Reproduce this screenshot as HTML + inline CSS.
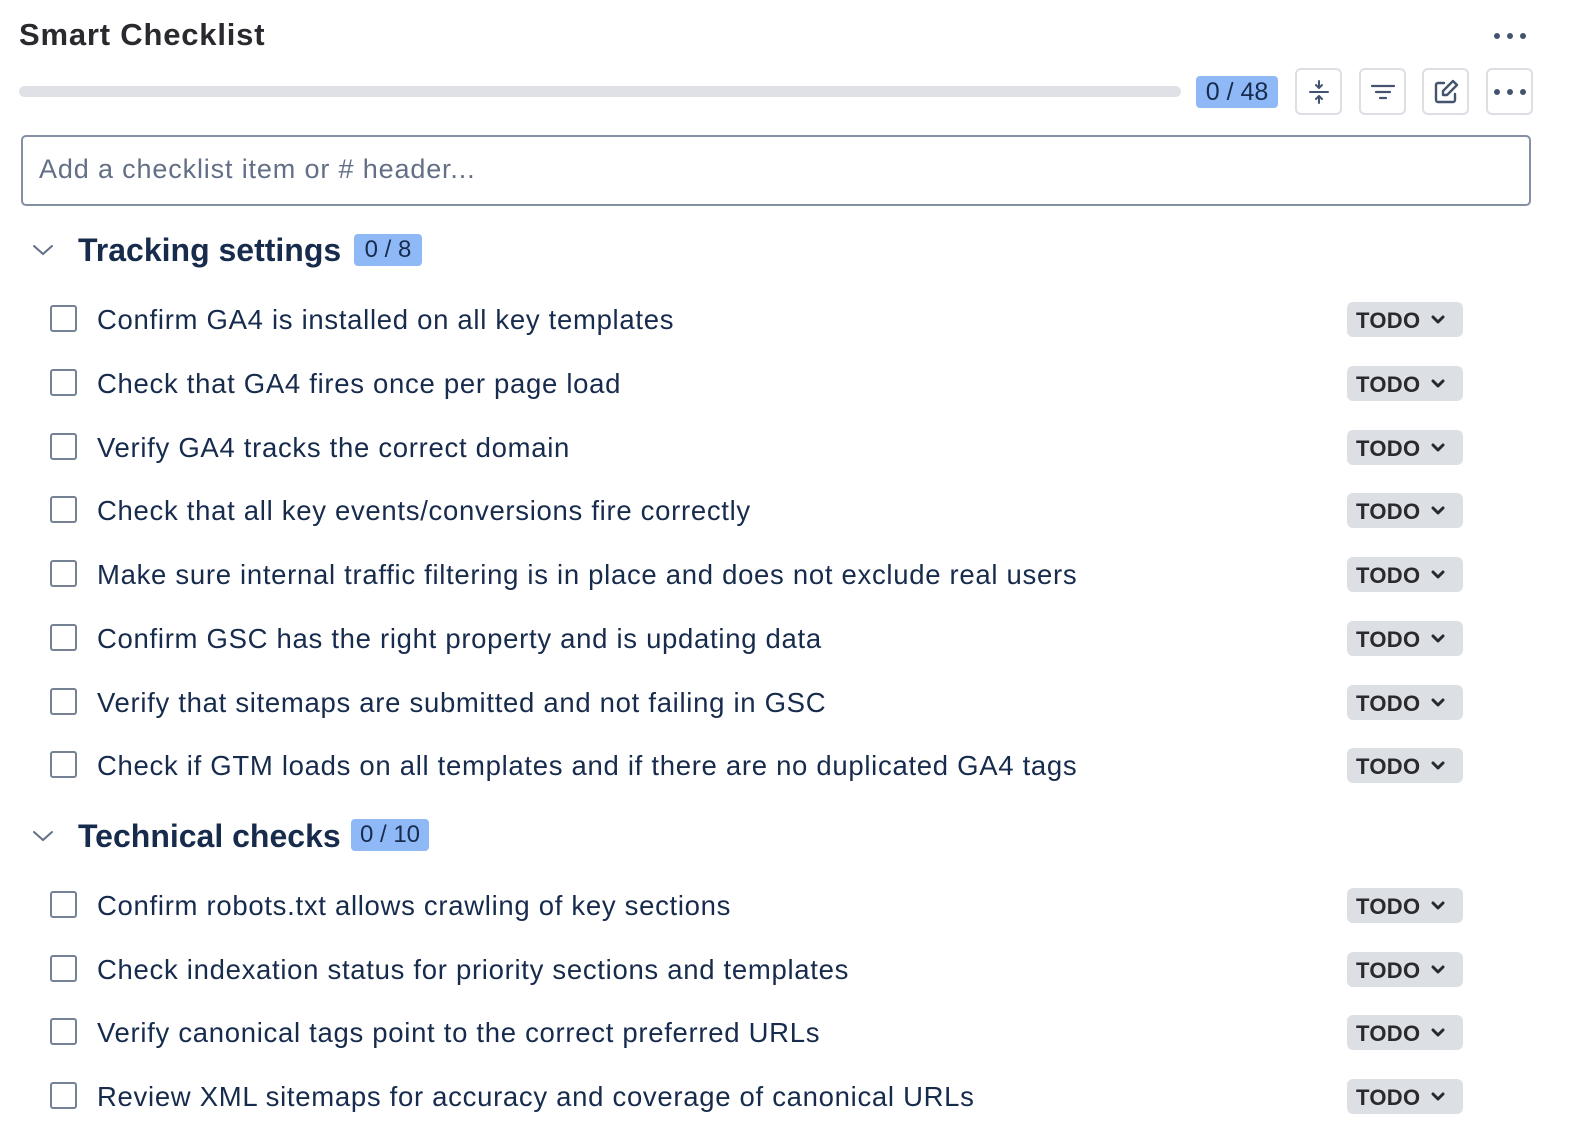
<!DOCTYPE html>
<html><head><meta charset="utf-8"><style>
*{box-sizing:border-box;margin:0;padding:0}
body{width:1574px;height:1132px;background:#fff;position:relative;overflow:hidden;font-family:"Liberation Sans",Arial,sans-serif;color:#172b4d}
.a{position:absolute}
.title{left:19px;top:17px;font-size:31px;font-weight:bold;color:#292a2e;letter-spacing:0.8px}
.dots{display:flex;gap:7px}
.dots i{width:6px;height:6px;border-radius:50%;background:#44546f;display:block}
.bar{left:19px;top:86px;width:1162px;height:11px;border-radius:6px;background:#dfe1e6}
.badge{background:#8fb8f6;border-radius:4px;color:#172b4d;display:flex;align-items:center;justify-content:center}
.btn{top:68px;width:47px;height:47px;border:2px solid #dcdfe4;border-radius:6px;display:flex;align-items:center;justify-content:center}
.inp{left:21px;top:135px;width:1510px;height:71px;border:2px solid #8590a2;border-radius:5px;font-size:27px;color:#626f86;padding:17px 0 0 16px;letter-spacing:0.85px}
.sec{font-size:32px;font-weight:bold;color:#172b4d;left:78px}
.cb{left:50px;width:27px;height:27px;border:2px solid #758195;border-radius:3px}
.txt{left:97px;font-size:27.5px;color:#172b4d;white-space:nowrap;letter-spacing:0.7px}
.todo{left:1347px;width:116px;height:35px;background:#dcdfe4;border-radius:6px;font-size:22px;font-weight:bold;color:#292a2e;padding:6px 0 0 9px;letter-spacing:0.3px}
.todo svg{position:absolute;left:84px;top:13px}
</style></head><body>
<div class="a title">Smart Checklist</div>
<div class="a dots" style="left:1494px;top:33px"><i></i><i></i><i></i></div>
<div class="a bar"></div>
<div class="a badge" style="left:1196px;top:76px;width:82px;height:32px;font-size:25px">0 / 48</div>
<div class="a btn" style="left:1295px"><svg width="22" height="26" viewBox="0 0 22 26" fill="none" stroke="#44546f" stroke-width="2" stroke-linecap="round" stroke-linejoin="round"><path d="M2 13H20M11 2V9M8 6L11 9L14 6M11 24V17M8 20L11 17L14 20"/></svg></div>
<div class="a btn" style="left:1359px"><svg width="26" height="22" viewBox="0 0 26 22" fill="none" stroke="#44546f" stroke-width="2.2" stroke-linecap="round"><path d="M2 5H24M6 11H20M10 17H16"/></svg></div>
<div class="a btn" style="left:1422px"><svg width="28" height="28" viewBox="0 0 28 28" fill="none" stroke="#44546f" stroke-width="2.4" stroke-linecap="round" stroke-linejoin="round"><path d="M12 5H6a2 2 0 0 0-2 2v15a2 2 0 0 0 2 2h15a2 2 0 0 0 2-2v-6"/><path d="M21 3l4 4-10 10h-4v-4z"/></svg></div>
<div class="a btn" style="left:1486px"><div class="dots"><i></i><i></i><i></i></div></div>
<div class="a inp">Add a checklist item or # header...</div>

<svg class="a" style="left:32px;top:243px" width="22" height="14" viewBox="0 0 22 14" fill="none" stroke="#626f86" stroke-width="2" stroke-linecap="round"><path d="M2 3L11 11L20 3"/></svg>
<div class="a sec" style="top:232px">Tracking settings</div>
<div class="a badge" style="left:354px;top:234px;width:68px;height:32px;font-size:24px">0 / 8</div>

<svg class="a" style="left:32px;top:829px" width="22" height="14" viewBox="0 0 22 14" fill="none" stroke="#626f86" stroke-width="2" stroke-linecap="round"><path d="M2 3L11 11L20 3"/></svg>
<div class="a sec" style="top:818px">Technical checks</div>
<div class="a badge" style="left:351px;top:819px;width:78px;height:32px;font-size:24px">0 / 10</div>

<div id="rows"></div>
<script>
var items=[[319,"Confirm GA4 is installed on all key templates"],[383,"Check that GA4 fires once per page load"],[447,"Verify GA4 tracks the correct domain"],[510,"Check that all key events/conversions fire correctly"],[574,"Make sure internal traffic filtering is in place and does not exclude real users"],[638,"Confirm GSC has the right property and is updating data"],[702,"Verify that sitemaps are submitted and not failing in GSC"],[765,"Check if GTM loads on all templates and if there are no duplicated GA4 tags"],[905,"Confirm robots.txt allows crawling of key sections"],[969,"Check indexation status for priority sections and templates"],[1032,"Verify canonical tags point to the correct preferred URLs"],[1096,"Review XML sitemaps for accuracy and coverage of canonical URLs"]];
var h="";
items.forEach(function(r){var c=r[0];
h+='<div class="a cb" style="top:'+(c-14)+'px"></div>';
h+='<div class="a txt" style="top:'+(c-15)+'px">'+r[1]+'</div>';
h+='<div class="a todo" style="top:'+(c-17)+'px">TODO<svg width="14" height="10" viewBox="0 0 14 10" fill="none" stroke="#292a2e" stroke-width="3" stroke-linecap="round" stroke-linejoin="round"><path d="M2 2L7 7L12 2"/></svg></div>';
});
document.getElementById("rows").innerHTML=h;
</script>
</body></html>
